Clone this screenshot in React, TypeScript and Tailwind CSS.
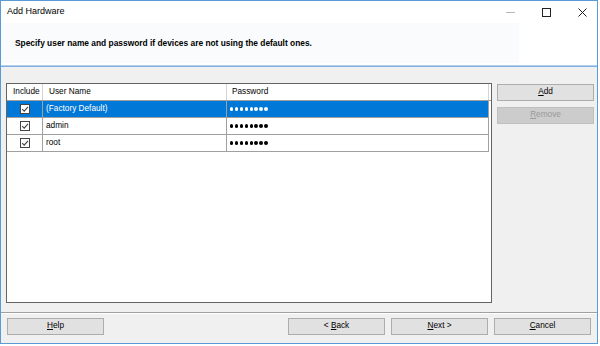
import React from "react";

const font = { fontFamily: '"Liberation Sans", Arial, sans-serif' };

function Dots({ white }: { white?: boolean }) {
  return (
    <div className="flex items-center gap-[1.5px]">
      {Array.from({ length: 8 }).map((_, i) => (
        <span
          key={i}
          className={`block w-[3.4px] h-[3.4px] rounded-full ${white ? "bg-white" : "bg-black"}`}
        />
      ))}
    </div>
  );
}

function Check() {
  return (
    <div className="w-[10px] h-[10px] border border-[#444444] bg-white flex items-center justify-center">
      <svg width="8" height="8" viewBox="0 0 8 8">
        <path d="M1.2 4.2 L3.2 6.2 L7 1.8" fill="none" stroke="#444444" strokeWidth="1.1" />
      </svg>
    </div>
  );
}

function Btn({ children, disabled, className = "" }: { children: React.ReactNode; disabled?: boolean; className?: string }) {
  return (
    <div
      className={`h-[17px] w-[97px] flex items-center justify-center border text-[8.25px] ${
        disabled ? "bg-[#cccccc] border-[#bfbfbf] text-[#9a9a9a]" : "bg-[#e1e1e1] border-[#adadad] text-black"
      } ${className}`}
    >
      {children}
    </div>
  );
}

const rows = [
  { name: "(Factory Default)", selected: true },
  { name: "admin", selected: false },
  { name: "root", selected: false },
];

export default function App() {
  return (
    <div className="w-[600px] h-[346px] bg-white" style={font}>
      <div className="w-[598px] h-[344px] border border-[#5b9bd5] flex flex-col">
        {/* Title bar */}
        <div className="h-[22px] flex items-center bg-white">
          <span className="pl-[6px] text-[9px] text-black">Add Hardware</span>
          <div className="ml-auto flex items-center h-full">
            <div className="w-[36px] h-full flex items-center justify-center">
              <svg width="9" height="9" viewBox="0 0 9 9">
                <line x1="0" y1="4.5" x2="9" y2="4.5" stroke="#b8b8b8" strokeWidth="1" />
              </svg>
            </div>
            <div className="w-[36px] h-full flex items-center justify-center">
              <svg width="9" height="9" viewBox="0 0 9 9">
                <rect x="0.5" y="0.5" width="8" height="8" fill="none" stroke="#222" strokeWidth="1" />
              </svg>
            </div>
            <div className="w-[36px] h-full flex items-center justify-center mr-[-3px]">
              <svg width="9" height="9" viewBox="0 0 9 9">
                <path d="M0.5 0.5 L8.5 8.5 M8.5 0.5 L0.5 8.5" stroke="#222" strokeWidth="1" />
              </svg>
            </div>
          </div>
        </div>
        {/* Header */}
        <div className="h-[42px] bg-white">
          <div className="w-[518px] h-[40px] bg-[#f9fbfd] flex items-center">
            <span className="pl-[14px] text-[8.4px] font-bold text-black">
              Specify user name and password if devices are not using the default ones.
            </span>
          </div>
        </div>
        <div className="h-[1px] bg-[#b4d2f0]" />
        <div className="h-[1px] bg-[#7fb0df]" />
        {/* Body */}
        <div className="flex-1 bg-[#f0f0f0] flex flex-col pt-[16px]">
          <div className="flex pl-[5px] gap-[5px]">
            <div className="w-[486px] h-[220px] border border-[#646464] bg-white text-[8.25px]">
              <div className="flex h-[17px] border-b border-[#a0a0a0]">
                <div className="w-[36px] border-r border-[#d5d5d5] flex items-center pl-[6px]">Include</div>
                <div className="w-[184px] border-r border-[#d5d5d5] flex items-center pl-[6px]">User Name</div>
                <div className="w-[262px] border-r border-[#d5d5d5] flex items-center pl-[5px]">Password</div>
              </div>
              {rows.map((r) => (
                <div
                  key={r.name}
                  className={`flex h-[17px] w-[482px] border-b ${
                    r.selected ? "bg-[#0078d7] text-white border-[#a0a0a0]" : "bg-white text-black border-[#a0a0a0]"
                  }`}
                >
                  <div className="w-[36px] border-r border-[#a0a0a0] flex items-center justify-center">
                    <Check />
                  </div>
                  <div className="w-[184px] border-r border-[#a0a0a0] flex items-center pl-[3px]">{r.name}</div>
                  <div className="w-[262px] border-r border-[#a0a0a0] flex items-center pl-[3px]">
                    <Dots white={r.selected} />
                  </div>
                </div>
              ))}
            </div>
            <div className="flex flex-col gap-[6px] pt-[1px]">
              <Btn>
                <span>
                  <u>A</u>dd
                </span>
              </Btn>
              <Btn disabled>
                <span>
                  <u>R</u>emove
                </span>
              </Btn>
            </div>
          </div>
          <div className="mt-[9px] h-[1px] bg-[#a0a0a0]" />
          <div className="h-[1px] bg-white" />
          <div className="mt-[4px] flex pl-[6px]">
            <Btn>
              <span>
                <u>H</u>elp
              </span>
            </Btn>
            <Btn className="ml-[184px]">
              <span>
                &lt; <u>B</u>ack
              </span>
            </Btn>
            <Btn className="ml-[6px]">
              <span>
                <u>N</u>ext &gt;
              </span>
            </Btn>
            <Btn className="ml-[6px]">
              <span>
                <u>C</u>ancel
              </span>
            </Btn>
          </div>
        </div>
      </div>
    </div>
  );
}
